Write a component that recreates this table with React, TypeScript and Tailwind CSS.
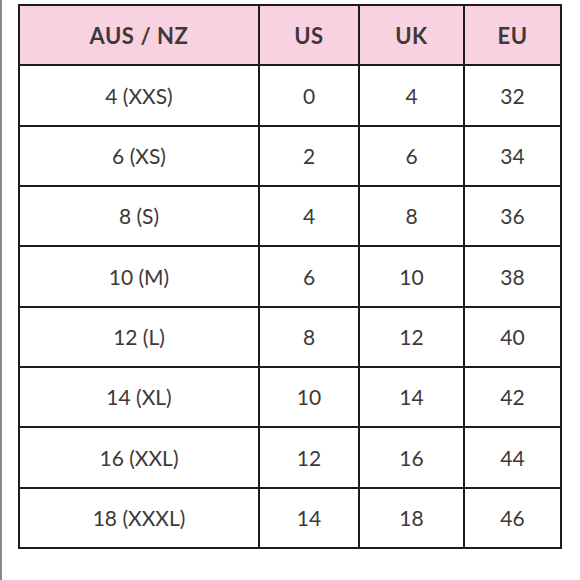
const HEAD = ['AUS / NZ', 'US', 'UK', 'EU'];

const ROWS = [
  ['4 (XXS)', '0', '4', '32'],
  ['6 (XS)', '2', '6', '34'],
  ['8 (S)', '4', '8', '36'],
  ['10 (M)', '6', '10', '38'],
  ['12 (L)', '8', '12', '40'],
  ['14 (XL)', '10', '14', '42'],
  ['16 (XXL)', '12', '16', '44'],
  ['18 (XXXL)', '14', '18', '46'],
];

export default function App() {
  return (
    <div className="flex h-[580px] w-[580px] bg-white font-['Lato','Liberation_Sans',sans-serif] text-[#3d3939]">
      {/* page edge */}
      <div className="w-[2px] bg-[#8a8a8a]" />

      {/* size chart */}
      <div className="ml-4 mt-1 grid h-[545px] w-[544px] grid-cols-[238px_98px_103px_95px] grid-rows-9 gap-[2px] bg-[#1c1c1c] p-[2px]">
        {HEAD.map((h) => (
          <div key={h} className="flex items-center justify-center bg-[#f9d2e2] text-[22px] font-bold tracking-wide">
            {h}
          </div>
        ))}
        {ROWS.map((row) =>
          row.map((cell, i) => (
            <div key={row[0] + i} className="flex items-center justify-center bg-white text-[21px]">
              {cell}
            </div>
          ))
        )}
      </div>
    </div>
  );
}
